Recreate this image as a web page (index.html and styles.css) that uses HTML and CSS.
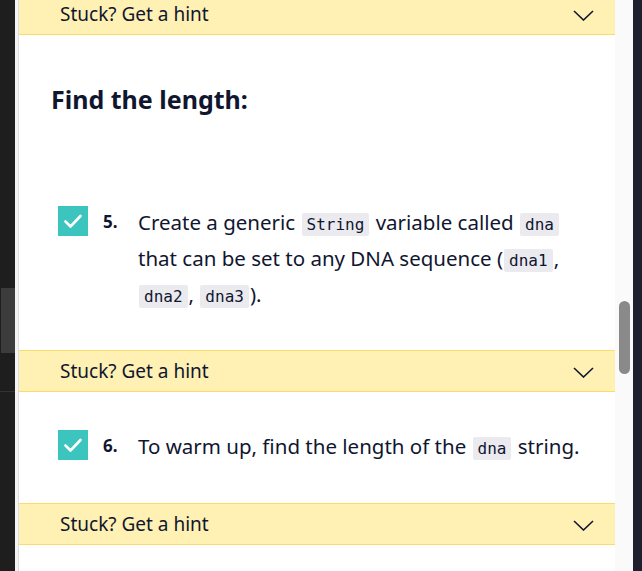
FILE: index.html
```html
<!DOCTYPE html>
<html lang="en">
<head>
<meta charset="utf-8">
<title>Find the length</title>
<link rel="stylesheet" href="styles.css">
</head>
<body>
<div class="frame">
  <div class="side-left">
    <div class="side-block"></div>
    <div class="side-line"></div>
  </div>
  <div class="side-edge"></div>
  <main class="panel">
    <div class="hint hint-first">
      <span class="hint-label">Stuck? Get a hint</span>
      <svg class="chev" width="21" height="11" viewBox="0 0 21 11"><path d="M1 1 L10.5 10 L20 1" fill="none" stroke="#10162f" stroke-width="1.6"/></svg>
    </div>
    <h2 class="heading">Find the length:</h2>
    <div class="task task-5">
      <span class="check"><svg width="30" height="30" viewBox="0 0 30 30"><path d="M7.5 15.5 L12.5 20.5 L22.5 10" fill="none" stroke="#fff" stroke-width="2.6" stroke-linecap="round" stroke-linejoin="round"/></svg></span>
      <span class="num">5.</span>
      <p class="text">Create a generic <code>String</code> variable called <code>dna</code> that can be set to any DNA sequence (<code>dna1</code>, <code>dna2</code>, <code>dna3</code>).</p>
    </div>
    <div class="hint hint-second">
      <span class="hint-label">Stuck? Get a hint</span>
      <svg class="chev" width="21" height="11" viewBox="0 0 21 11"><path d="M1 1 L10.5 10 L20 1" fill="none" stroke="#10162f" stroke-width="1.6"/></svg>
    </div>
    <div class="task task-6">
      <span class="check"><svg width="30" height="30" viewBox="0 0 30 30"><path d="M7.5 15.5 L12.5 20.5 L22.5 10" fill="none" stroke="#fff" stroke-width="2.6" stroke-linecap="round" stroke-linejoin="round"/></svg></span>
      <span class="num">6.</span>
      <p class="text">To warm up, find the length of the <code>dna</code> string.</p>
    </div>
    <div class="hint hint-third">
      <span class="hint-label">Stuck? Get a hint</span>
      <svg class="chev" width="21" height="11" viewBox="0 0 21 11"><path d="M1 1 L10.5 10 L20 1" fill="none" stroke="#10162f" stroke-width="1.6"/></svg>
    </div>
  </main>
  <div class="scroll-track"><div class="scroll-thumb"></div></div>
  <div class="side-right"></div>
</div>
</body>
</html>
```

FILE: styles.css
```css
* { box-sizing: border-box; }
html, body { margin: 0; padding: 0; }
body {
  width: 642px;
  height: 571px;
  overflow: hidden;
  font-family: "Noto Sans", "Liberation Sans", sans-serif;
  color: #10162f;
  background: #fff;
}
.frame {
  display: flex;
  height: 571px;
}
.side-left {
  width: 15px;
  background: #1e1e1e;
  display: flex;
  flex-direction: column;
}
.side-block {
  margin: 288px 0 0 1px;
  height: 65px;
  background: #3c3c3c;
}
.side-line {
  margin-top: 38px;
  height: 1px;
  background: #333;
}
.side-edge {
  width: 4px;
  background: #f4f4f4;
  border-right: 1px solid #dedede;
}
.panel {
  width: 596px;
  background: #fff;
  overflow: hidden;
  display: flex;
  flex-direction: column;
}
.hint {
  height: 42px;
  flex: none;
  background: #fff0b3;
  border-top: 1px solid #fbdb6a;
  border-bottom: 1px solid #fbdb6a;
  display: flex;
  align-items: center;
  justify-content: space-between;
  padding: 0 21px 0 41px;
}
.hint-label {
  font-size: 19px;
}
.chev { display: block; margin-top: 2px; }
.hint-first { margin-top: -7px; }
.heading {
  margin: 48px 0 0 32px;
  font-size: 25px;
  line-height: 32px;
  font-weight: 700;
}
.task {
  display: flex;
  align-items: flex-start;
  padding-left: 39px;
}
.task-5 { margin-top: 89px; }
.task-6 { margin-top: 36px; }
.hint-second { margin-top: 38px; }
.hint-third { margin-top: 39px; }
.check {
  flex: none;
  width: 30px;
  height: 30px;
  margin-top: 2px;
  background: #3cc4be;
  display: block;
}
.check svg { display: block; }
.num {
  flex: none;
  width: 35px;
  margin-left: 15px;
  font-size: 17px;
  font-weight: 700;
  line-height: 36px;
}
.text {
  margin: 0;
  font-size: 20.5px;
  line-height: 36px;
  width: 450px;
}
code {
  font-family: "DejaVu Sans Mono", "Liberation Mono", monospace;
  font-size: 16px;
  line-height: 1;
  background: #eaeaef;
  padding: 2px 5px;
  margin: 0 1px;
  border-radius: 2px;
}
.scroll-track {
  width: 18px;
  background: #fafafa;
  padding: 301px 3px 0 4px;
}
.scroll-thumb {
  height: 73px;
  background: #8a8a8a;
  border-radius: 6px;
}
.side-right {
  width: 9px;
  background: #1f1f2d;
}
```
